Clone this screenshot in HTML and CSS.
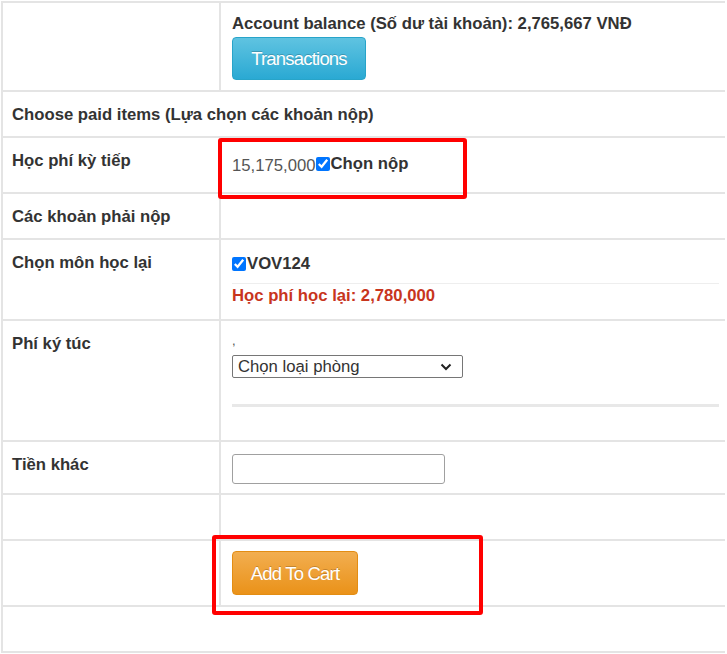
FILE: index.html
```html
<!DOCTYPE html>
<html lang="vi">
<head>
<meta charset="utf-8">
<title>Choose paid items</title>
<link rel="stylesheet" href="styles.css">
</head>
<body>
<div class="sheet">
  <div class="row r1">
    <div class="lbl"></div>
    <div class="val">
      <div class="strong">Account balance (Số dư tài khoản): 2,765,667 VNĐ</div>
      <button class="btn btn-info" type="button">Transactions</button>
    </div>
  </div>
  <div class="row full r2">
    <div class="lbl wide">Choose paid items (Lựa chọn các khoản nộp)</div>
  </div>
  <div class="row r3">
    <div class="lbl">Học phí kỳ tiếp</div>
    <div class="val"><span class="amount">15,175,000</span><label class="check"><input type="checkbox" checked><span class="strong">Chọn nộp</span></label></div>
  </div>
  <div class="row r4">
    <div class="lbl">Các khoản phải nộp</div>
    <div class="val"></div>
  </div>
  <div class="row r5">
    <div class="lbl">Chọn môn học lại</div>
    <div class="val">
      <label class="check"><input type="checkbox" checked><span class="strong">VOV124</span></label>
      <div class="thin-rule"></div>
      <div class="fee">Học phí học lại: 2,780,000</div>
    </div>
  </div>
  <div class="row r6">
    <div class="lbl">Phí ký túc</div>
    <div class="val">
      <div class="comma">,</div>
      <div class="select-wrap">
        <select class="room"><option>Chọn loại phòng</option></select>
        <svg class="chev" width="12" height="8" viewBox="0 0 12 8" aria-hidden="true"><path d="M1.5 1.5 L6 6 L10.5 1.5" fill="none" stroke="#222" stroke-width="2"/></svg>
      </div>
      <div class="thick-rule"></div>
    </div>
  </div>
  <div class="row r7">
    <div class="lbl">Tiền khác</div>
    <div class="val"><input class="money" type="text"></div>
  </div>
  <div class="row r8">
    <div class="lbl"></div>
    <div class="val"></div>
  </div>
  <div class="row r9">
    <div class="lbl"></div>
    <div class="val"><button class="btn btn-warning" type="button">Add To Cart</button></div>
  </div>
  <div class="row full r10">
    <div class="lbl wide"></div>
  </div>
  <div class="mark mark1"></div>
  <div class="mark mark2"></div>
</div>
</body>
</html>
```
FILE: styles.css
```css
* { box-sizing: border-box; }
html, body { margin: 0; padding: 0; background: #fff; }
body {
  font-family: "Liberation Sans", Arial, sans-serif;
  font-size: 16.7px;
  color: #333;
  line-height: 23px;
}
.sheet {
  position: relative;
  margin: 1px 0 0 1px;
  width: 724px;
  border-top: 2px solid #e4e4e4;
  border-left: 2px solid #e4e4e4;
}
.row {
  display: grid;
  grid-template-columns: 218px 1fr;
  border-bottom: 2px solid #e4e4e4;
}
.row.full { grid-template-columns: 1fr; }
.lbl {
  border-right: 2px solid #e4e4e4;
  padding: 11px 0 0 9px;
  font-weight: bold;
}
.lbl.wide { border-right: 0; }
.val { padding: 14px 0 0 11px; }
.strong { font-weight: bold; }

.r1 { height: 89px; }
.r1 .val { padding-top: 9px; }
.r2 { height: 46px; }
.r2 .lbl { padding-top: 11px; }
.r3 { height: 56px; }
.r4 { height: 46px; }
.r5 { height: 81px; }
.r5 .val { padding-top: 12px; }
.r6 { height: 121px; }
.r7 { height: 53px; }
.r8 { height: 46px; }
.r9 { height: 66px; }
.r10 { height: 46px; }

.btn {
  display: block;
  font-family: "Liberation Sans", Arial, sans-serif;
  font-size: 18.5px;
  line-height: 21px;
  letter-spacing: -0.8px;
  white-space: nowrap;
  text-align: center;
  color: #fff;
  text-shadow: 0 -1px 0 rgba(0,0,0,0.2);
  border-radius: 4px;
  padding: 0;
  cursor: pointer;
}
.btn-info {
  margin-top: 2px;
  width: 134px;
  height: 43px;
  background: linear-gradient(#5fc3e1, #2aa9d3);
  border: 1px solid #28a4c9;
}
.btn-warning {
  width: 126px;
  height: 44px;
  background: linear-gradient(#f2ae50, #ea9219);
  border: 1px solid #e38d13;
}
.amount { color: #555; }
.check { display: inline-flex; align-items: center; }
.check input {
  margin: 0 1px 0 0;
  width: 14px;
  height: 14px;
}
.thin-rule {
  margin: 6px 6px 0 0;
  border-top: 1px solid #eee;
}
.fee {
  margin-top: 0;
  color: #c8351d;
  font-weight: bold;
}
.r6 .val { padding-top: 14px; }
.comma {
  font-size: 13px;
  line-height: 12px;
  height: 20px;
  color: #555;
}
.select-wrap {
  position: relative;
  width: 231px;
  height: 23px;
}
.room {
  display: block;
  width: 231px;
  height: 23px;
  appearance: none;
  -webkit-appearance: none;
  font-family: "Liberation Sans", Arial, sans-serif;
  font-size: 16.7px;
  color: #333;
  border: 1px solid #767676;
  border-radius: 2px;
  background: #fff;
  padding: 0 0 0 5px;
}
.chev {
  position: absolute;
  right: 11px;
  top: 8px;
  pointer-events: none;
}
.thick-rule {
  margin: 26px 6px 0 0;
  border-top: 3px solid #e8e8e8;
}
.r7 .val { padding-top: 12px; }
.money {
  display: block;
  width: 213px;
  height: 30px;
  border: 1px solid #a0a0a0;
  border-radius: 3px;
  font-size: 16px;
}
.r9 .val { padding-top: 10px; }
.mark {
  position: absolute;
  border: 4px solid #ff0000;
  border-radius: 3px;
}
.mark1 { left: 215px; top: 135px; width: 249px; height: 61px; }
.mark2 { left: 209px; top: 532px; width: 271px; height: 80px; }
```
